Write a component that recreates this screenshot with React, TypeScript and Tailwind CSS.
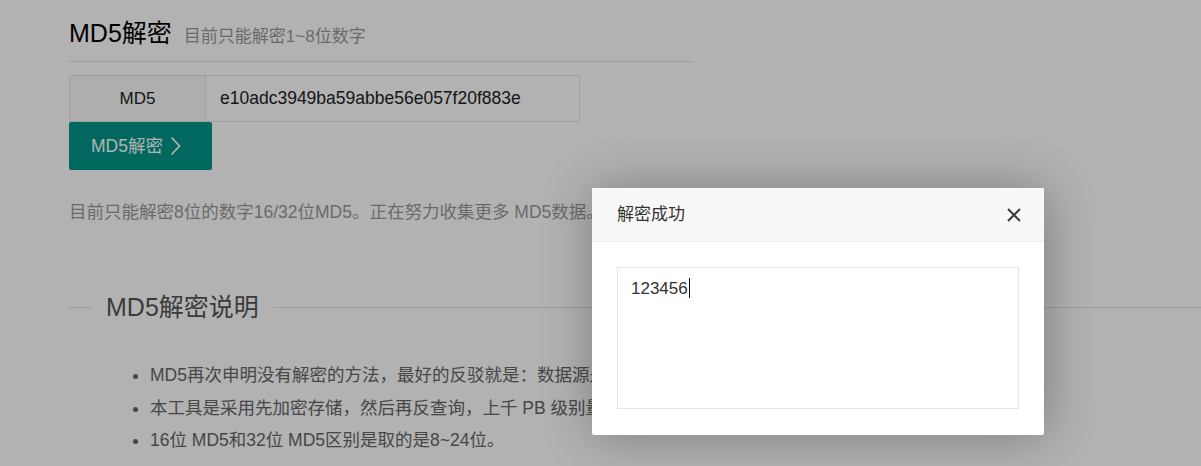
import React from 'react';

const bullets = [
  'MD5再次申明没有解密的方法，最好的反驳就是：数据源是否有这个数据。',
  '本工具是采用先加密存储，然后再反查询，上千 PB 级别量的数据。',
  '16位 MD5和32位 MD5区别是取的是8~24位。',
];

function ChevronRight() {
  return (
    <svg width="11" height="20" viewBox="0 0 11 20" fill="none" className="ml-[7px]">
      <polyline points="1.5,1.5 9.5,10 1.5,18.5" stroke="currentColor" strokeWidth="1.7" />
    </svg>
  );
}

function CloseIcon() {
  return (
    <svg width="16" height="16" viewBox="0 0 16 16" fill="none">
      <path d="M2 2 L14 14 M14 2 L2 14" stroke="#3a3a3a" strokeWidth="2" />
    </svg>
  );
}

export default function App() {
  return (
    <div className="relative h-[466px] w-full overflow-hidden bg-white font-['Liberation_Sans','Noto_Sans_CJK_SC',sans-serif]">
      {/* page */}
      <div className="pl-[69px]">
        <div className="w-[624px] border-b border-[#e2e2e2] pt-[14px] pb-[9px] flex items-baseline">
          <h1 className="text-[25px] leading-[38px] text-[#000]">MD5解密</h1>
          <span className="ml-[12px] text-[17px] text-[#999]">目前只能解密1~8位数字</span>
        </div>

        <div className="mt-[13px] flex h-[47px] w-[511px] rounded-[2px] border border-[#e6e6e6]">
          <div className="flex w-[136px] items-center justify-center border-r border-[#e6e6e6] bg-[#fafafa] text-[17px] text-[#222]">
            MD5
          </div>
          <div className="flex flex-1 items-center pl-[14px] text-[17.5px] text-[#222]">
            e10adc3949ba59abbe56e057f20f883e
          </div>
        </div>

        <button className="flex h-[48px] w-[143px] items-center justify-start rounded-[2px] bg-[#009688] pl-[22px] text-[17.5px] text-white">
          MD5解密
          <ChevronRight />
        </button>

        <p className="mt-[30px] text-[17.5px] leading-[24px] text-[#999]">
          目前只能解密8位的数字16/32位MD5。正在努力收集更多 MD5数据。
        </p>
      </div>

      <div className="mt-[64px] flex items-center pl-[69px]">
        <div className="h-px w-[22px] bg-[#e2e2e2]" />
        <span className="px-[15px] text-[25px] leading-[38px] text-[#555]">MD5解密说明</span>
        <div className="h-px flex-1 bg-[#e2e2e2]" />
      </div>

      <ul className="mt-[33px] list-disc pl-[150px] text-[17.5px] leading-[32.5px] text-[#666] marker:text-[#666]">
        {bullets.map(b => (
          <li key={b} className="whitespace-nowrap">
            {b}
          </li>
        ))}
      </ul>

      {/* shade */}
      <div className="absolute inset-0 bg-black/30" />

      {/* dialog */}
      <div className="absolute left-[592px] top-[188px] w-[452px] overflow-hidden rounded-[2px] bg-white shadow-[1px_1px_50px_rgba(0,0,0,0.3)]">
        <div className="flex h-[54px] items-center justify-between border-b border-[#eee] bg-[#f8f8f8] pl-[25px] pr-[22px]">
          <span className="text-[17px] text-[#333]">解密成功</span>
          <CloseIcon />
        </div>
        <div className="px-[25px] pt-[25px] pb-[26px]">
          <div className="h-[142px] w-[402px] border border-[#e6e6e6] px-[13px] pt-[6px] text-[17px] leading-[24px] text-[#333]">
            123456
            <span className="ml-px inline-block h-[20px] w-px translate-y-[4px] bg-[#111]" />
          </div>
        </div>
      </div>
    </div>
  );
}
